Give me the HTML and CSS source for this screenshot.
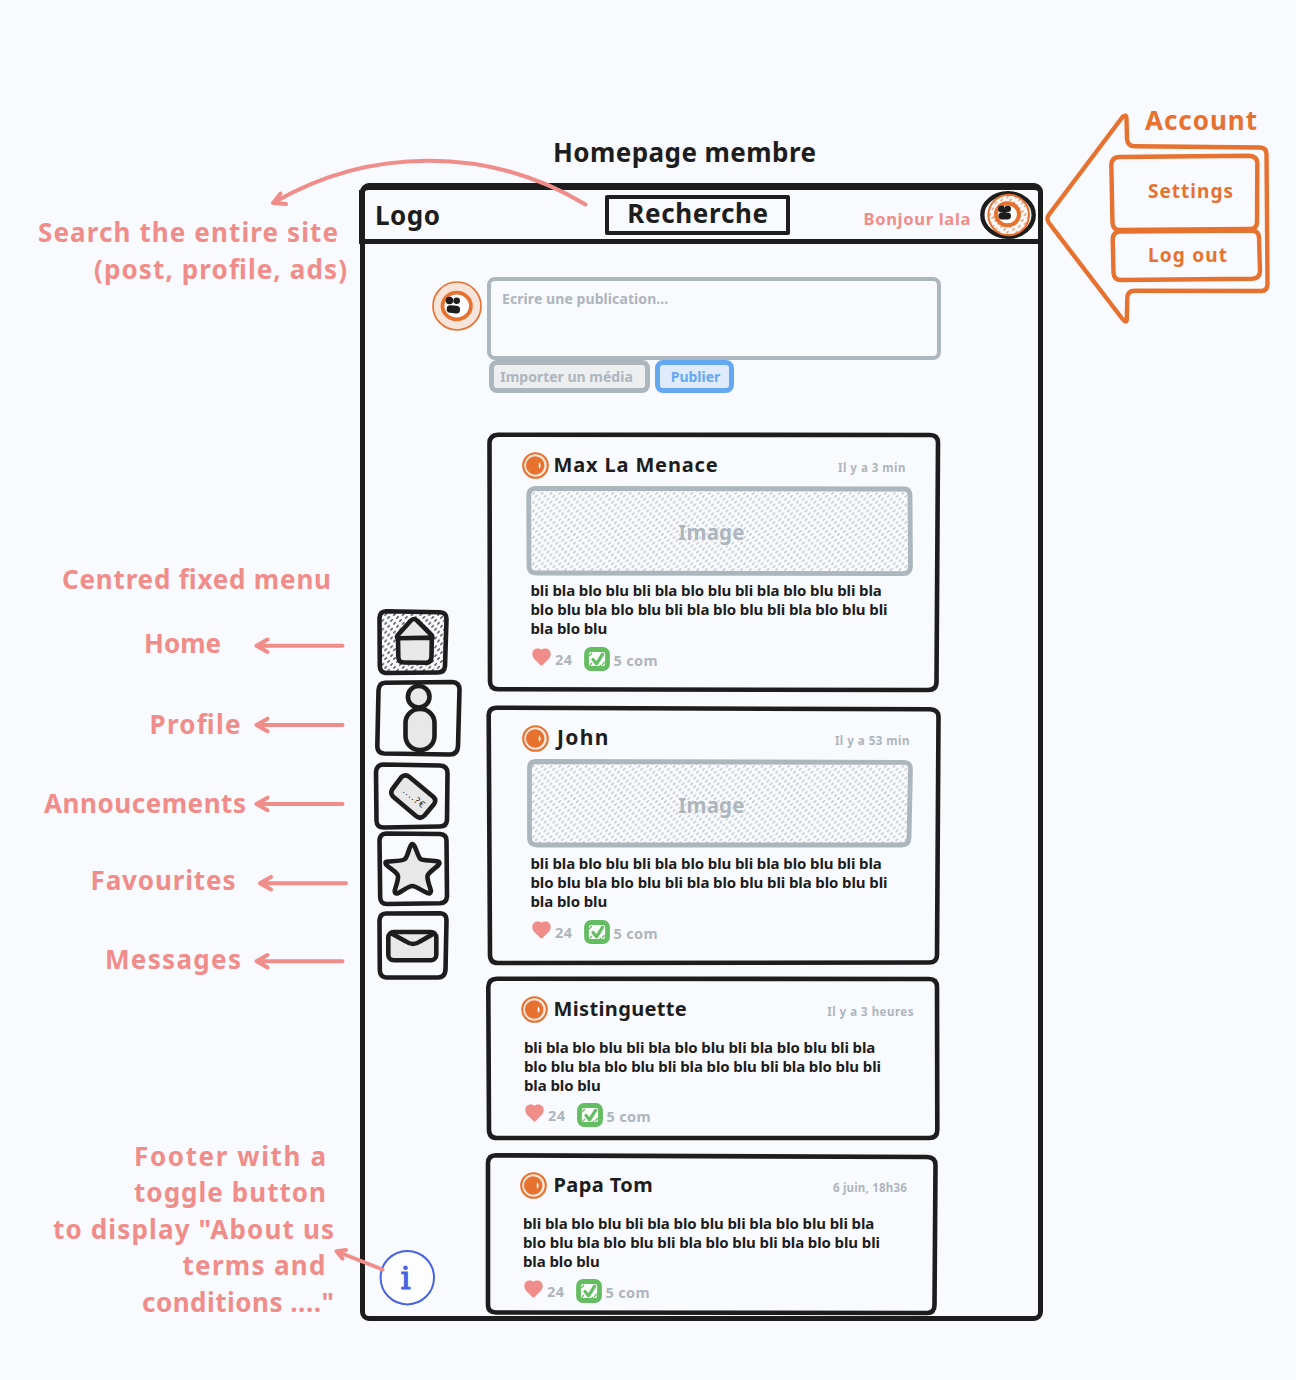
FILE: index.html
```html
<!DOCTYPE html>
<html lang="fr">
<head>
<meta charset="utf-8">
<title>Homepage membre</title>
<link rel="stylesheet" href="styles.css">
</head>
<body>
<svg class="defs" aria-hidden="true">
  <defs>
    <pattern id="hatch-grey" width="8.8" height="8.8" patternUnits="userSpaceOnUse">
      <path transform="scale(1.1)" d="M.66 2 2 .66M3.33 4.66 4.66 3.33M6 7.33 7.33 6" stroke="#bfc4c9" stroke-width="1.35" stroke-linecap="round"/>
    </pattern>
    <pattern id="hatch-black" width="8.8" height="8.8" patternUnits="userSpaceOnUse">
      <path transform="scale(1.1)" d="M.66 2 2 .66M3.33 4.66 4.66 3.33M6 7.33 7.33 6" stroke="#444" stroke-width="1.25" stroke-linecap="round"/>
    </pattern>
    <pattern id="hatch-orange" width="8.8" height="8.8" patternUnits="userSpaceOnUse">
      <path transform="scale(1.1)" d="M.66 2 2 .66M3.33 4.66 4.66 3.33M6 7.33 7.33 6" stroke="#ec8c55" stroke-width="1.25" stroke-linecap="round"/>
    </pattern>
  </defs>
  <symbol id="badge" viewBox="0 0 27 27">
    <circle cx="13.5" cy="13.5" r="12.3" fill="#f9e6db" stroke="#e7712f" stroke-width="2.1"/>
    <circle cx="13.2" cy="13.5" r="9.2" fill="#e7712f"/>
    <path d="M17 10.3q3.2 3.2.2 6.6-.9-3.300-.2-6.600z" fill="#fff"/>
  </symbol>
  <symbol id="heart" viewBox="0 0 19 18">
    <path d="M9.500 1.900C7.500-.3.300-.4.300 6c0 5 4.700 6.700 7.500 10.600q1.700 1.700 3.400 0C14 12.700 18.700 11 18.700 6c0-6.400-7.200-6.300-9.200-4.100z" fill="#f08c89"/>
  </symbol>
  <symbol id="check" viewBox="0 0 26 24">
    <rect x="2.500" y="2.500" width="21" height="19" rx="4.500" fill="#fbfdfb" stroke="#65bd63" stroke-width="4.800"/>
    <path d="M5 9l3-3M6 18l2-2M18 18l3-3M15 20l2-2" stroke="#65bd63" stroke-width="1.300"/>
    <path d="M9 12.500l3.500 4.300 6-9.500" fill="none" stroke="#65bd63" stroke-width="3.200" stroke-linecap="round" stroke-linejoin="round"/>
  </symbol>
</svg>

<div class="board">
  <section class="site">
    <header class="topbar">
      <span class="logo">Logo</span>
      <span class="search">Recherche</span>
      <span class="hello">Bonjour lala</span>
      <svg class="me" width="56" height="48" viewBox="980 192 56 48">
        <ellipse cx="1008" cy="216" rx="25.700" ry="21.700" fill="#f9fafd" stroke="#1d1d1d" stroke-width="4.400"/>
        <circle cx="1008.700" cy="216" r="20.300" fill="url(#hatch-orange)" stroke="#e7712f" stroke-width="2"/>
        <ellipse cx="1007.500" cy="215.300" rx="11.500" ry="11" fill="#fff" stroke="#e7712f" stroke-width="4"/>
        <g fill="#1d1d1d">
          <circle cx="1001.500" cy="210" r="3.400"/><circle cx="1007.800" cy="209.800" r="3.200"/>
          <rect x="998.500" y="213.500" width="12.500" height="7" rx="3.400"/><circle cx="1004.500" cy="212" r="2.300"/>
        </g>
      </svg>
    </header>

    <main class="content">
      <div class="composer">
        <svg class="portrait" width="50" height="50" viewBox="432 281 50 50">
          <circle cx="457" cy="306" r="24" fill="#f6e4da" stroke="#e7712f" stroke-width="1.700"/>
          <ellipse cx="456.700" cy="306" rx="14.200" ry="13.300" fill="#fff" stroke="#e7712f" stroke-width="3.800"/>
          <g fill="#1d1d1d">
            <circle cx="449.500" cy="300.500" r="3.800"/><circle cx="456.700" cy="300.700" r="3.300"/>
            <rect x="446.700" y="305.500" width="13.400" height="7.600" rx="3.700" transform="rotate(6 453 309)"/>
          </g>
        </svg>
        <div class="editor">
          <div class="field"><span>Ecrire une publication...</span></div>
          <div class="buttons">
            <button class="btn btn-media"><span>Importer un média</span></button>
            <button class="btn btn-send"><span>Publier</span></button>
          </div>
        </div>
      </div>

      <nav class="menu">
        <svg class="tile tile-in" width="72" height="66" viewBox="377 609 72 66">
          <path class="ink" fill="url(#hatch-black)" d="M386 611.300L440 612.200Q446.500 612.500 446.500 619L445 666Q444.500 672.500 438 672.500L386 673Q380 672.500 379.800 666L379.500 618Q380 611.500 386 611.300Z"/>
          <path class="ink solid" d="M398.300 634.500L410.500 621Q414 617 417.500 621L431 634.500Q434 638 431 638L400 638.300Q395 638 398.300 634.500Z"/>
          <path class="ink solid" d="M398 638.300L431.800 637.800L431.500 657Q431 662.800 426 662.800L404 662.500Q398.500 662.500 398.300 657Z"/>
        </svg>
        <svg class="tile tile-profile" width="86" height="77" viewBox="375 679.500 86 77">
          <path class="ink" d="M385 682.300L452 681.500Q459.500 682 459.500 689L458 746Q457.500 753.800 450 754L384 753Q377.300 752.500 377.300 746L378.500 690Q379 682.500 385 682.300Z"/>
          <circle class="ink solid" cx="418.700" cy="696.300" r="10.800"/>
          <rect class="ink solid" x="405.500" y="708.500" width="29" height="41" rx="14"/>
        </svg>
        <svg class="tile tile-ads" width="76" height="68" viewBox="374 762 76 68">
          <path class="ink" d="M383 764.500L440 765.500Q447.500 766 447.500 773L447 820Q446.500 826.500 440 826.500L384 827.500Q376.800 827.500 376.500 821L376 772Q376.500 765 383 764.500Z"/>
          <path class="ink solid" d="M401.500 777Q405.500 773.700 409.500 777L433.500 797Q437 800.500 433.700 804.500L424.500 815.500Q420.500 819.700 416 816L393.500 797Q389.500 793 392.500 789Z"/>
          <text class="price" x="402.500" y="792" transform="rotate(40 402.500 792)" textLength="25">....?€</text>
        </svg>
        <svg class="tile tile-in tile-fav" width="72" height="75" viewBox="377 830.500 72 75">
          <path class="ink" d="M386 833L440 833.500Q446.500 834 446.500 840L447 896Q446.500 902.500 440 902.800L387 903.500Q380.500 903.500 380.200 897L379.500 840Q380 833.300 386 833Z"/>
          <path class="ink solid" d="M410.500 845.500Q412.300 841.500 414.500 845.500C416.500 849.500 418.300 856.500 420.500 858.500C423 860.500 432.500 859.500 438 861Q440.800 862 438.500 864.500C434.500 868.500 428.500 871.500 427.500 875.500C427 880 430 886 431 890.500Q430.500 893.800 427.500 892.500C422 890.500 416 885.500 412.500 885.500C408.500 885.500 402.500 890.500 397.500 893Q394.500 893.500 394.700 890.500C395.500 886 398.500 880 398 875.500C397 871 390 868.500 386 864Q384.300 861 387.500 861C393 860.500 401.500 861 405 858.500C407.500 856 408.500 849.500 410.500 845.500Z"/>
        </svg>
        <svg class="tile tile-in tile-mail" width="72" height="69" viewBox="377 911 72 69">
          <path class="ink" d="M386 913.500L440 913.300Q446.500 913.500 446.500 920L445.500 970Q445 977.500 438 977.500L386 977.500Q380 977 379.800 970L379.500 920Q380 913.800 386 913.500Z"/>
          <rect class="ink solid" x="388.300" y="932" width="48" height="28.300" rx="5.500"/>
          <path class="ink" d="M391.500 933.500L406 941.500Q413 946.500 420 941.500L434 933.500"/>
        </svg>
      </nav>

      <div class="feed">
        <article class="post">
          <svg class="outline"><path d="M11 2.700L443 3Q451 3 451 11L449.500 250Q449.500 258 441 258L11 257.300Q3 257 3 249L2.500 11Q2.700 3 11 2.700Z"/></svg>
          <header class="author"><svg class="badge"><use href="#badge"/></svg><h2 class="n-max">Max La Menace</h2><time>Il y a 3 min</time></header>
          <div class="media">
            <svg><path fill="url(#hatch-grey)" d="M9 2.300L378 3Q384 3 384 10L384.500 80Q384.500 87.500 377 87.700L10 87Q3 87 3 80L2.700 9Q3 2.500 9 2.300Z"/></svg><span>Image</span>
          </div>
          <p>bli bla blo blu bli bla blo blu bli bla blo blu bli bla<br>blo blu bla blo blu bli bla blo blu bli bla blo blu bli<br>bla blo blu</p>
          <footer><svg class="heart"><use href="#heart"/></svg><span class="likes">24</span><svg class="check"><use href="#check"/></svg><span class="comments">5 com</span></footer>
        </article>

        <article class="post post-john">
          <svg class="outline"><path d="M9 2.700L443 4.300Q451.500 4.500 451.500 12L450 250Q450 257.500 442 257.500L11 258Q3 258 3 250L1.700 10Q2 3 9 2.700Z"/></svg>
          <header class="author"><svg class="badge"><use href="#badge"/></svg><h2 class="n-john">John</h2><time>Il y a 53 min</time></header>
          <div class="media">
            <svg><path fill="url(#hatch-grey)" d="M10 2.500L378 3.300Q384.700 3.500 384.500 10L383 79Q383 86 375 86L11 86Q3.500 86 3.500 79L3.500 9Q3.500 2.700 10 2.500Z"/></svg><span>Image</span>
          </div>
          <p>bli bla blo blu bli bla blo blu bli bla blo blu bli bla<br>blo blu bla blo blu bli bla blo blu bli bla blo blu bli<br>bla blo blu</p>
          <footer><svg class="heart"><use href="#heart"/></svg><span class="likes">24</span><svg class="check"><use href="#check"/></svg><span class="comments">5 com</span></footer>
        </article>

        <article class="post post-text post-mist">
          <svg class="outline"><path d="M10 2.800L442 3Q450 3 450 11L450.300 154Q450.300 162 442 162L10 162Q2 162 2 154L1.300 11Q1.500 3 10 2.800Z"/></svg>
          <header class="author"><svg class="badge"><use href="#badge"/></svg><h2 class="n-mist">Mistinguette</h2><time>Il y a 3 heures</time></header>
          <p>bli bla blo blu bli bla blo blu bli bla blo blu bli bla<br>blo blu bla blo blu bli bla blo blu bli bla blo blu bli<br>bla blo blu</p>
          <footer><svg class="heart"><use href="#heart"/></svg><span class="likes">24</span><svg class="check"><use href="#check"/></svg><span class="comments">5 com</span></footer>
        </article>

        <article class="post post-text post-tom">
          <svg class="outline"><path d="M9 2.300L440 4Q448.500 4.200 448.500 12L447.500 152Q447.500 160 440 160L9 159.500Q1 159.500 1 152L1 10Q1.200 2.500 9 2.300Z"/></svg>
          <header class="author"><svg class="badge"><use href="#badge"/></svg><h2 class="n-tom">Papa Tom</h2><time>6 juin, 18h36</time></header>
          <p>bli bla blo blu bli bla blo blu bli bla blo blu bli bla<br>blo blu bla blo blu bli bla blo blu bli bla blo blu bli<br>bla blo blu</p>
          <footer><svg class="heart"><use href="#heart"/></svg><span class="likes">24</span><svg class="check"><use href="#check"/></svg><span class="comments">5 com</span></footer>
        </article>
      </div>
    </main>
  </section>

  <!-- Notes and arrows laid over the board -->
  <svg class="notes" width="1296" height="1380" viewBox="0 0 1296 1380">
    <text class="title" x="553" y="162" textLength="263">Homepage membre</text>
    <g class="pink">
      <text x="38" y="242" textLength="300">Search the entire site</text>
      <text x="94" y="279" textLength="253">(post, profile, ads)</text>
      <text x="62" y="589" textLength="269">Centred fixed menu</text>
      <text x="144" y="653" textLength="77">Home</text>
      <text x="149.500" y="734" textLength="91">Profile</text>
      <text x="44" y="813" textLength="202">Annoucements</text>
      <text x="90.500" y="890" textLength="145">Favourites</text>
      <text x="105" y="969" textLength="136">Messages</text>
      <text x="134" y="1166" textLength="192">Footer with a</text>
      <text x="134" y="1202" textLength="192">toggle button</text>
      <text x="53" y="1239" textLength="281">to display "About us</text>
      <text x="182.500" y="1275" textLength="143">terms and</text>
      <text x="142" y="1312" textLength="192">conditions ...."</text>
      <path d="M585.500 204.500C490 146.500 370 146.500 274 202.500M280.500 193.500L273 203L286 204"/>
      <path d="M342.500 645.800H257M267.500 639.500L256.500 645.800L267.500 652"/>
      <path d="M342.500 725H257M267.500 718.700L256.500 725L267.500 731.200"/>
      <path d="M342.500 804H257M267.500 797.700L256.500 804L267.500 810.200"/>
      <path d="M346 883.300H260.500M271 877L260 883.300L271 889.500"/>
      <path d="M342.500 961.300H257M267.500 955L256.500 961.300L267.500 967.500"/>
    </g>
    <circle cx="407.300" cy="1277.700" r="26.700" fill="#fdfdfe" stroke="#4662e4" stroke-width="2"/>
    <text class="info" x="405.700" y="1289" text-anchor="middle">i</text>
    <path class="pink-line" d="M382.500 1269.500L337 1251.500M346 1250L336.500 1251.300L342.500 1258.500"/>
    <g class="orange">
      <text x="1145" y="130" textLength="112">Account</text>
      <text class="small" x="1148" y="197.500" textLength="85">Settings</text>
      <text class="small" x="1148" y="261.500" textLength="79">Log out</text>
      <path d="M1049 214.500L1122.500 117Q1126.500 113.500 1126.500 119L1127 139Q1127.500 146.300 1135 146.300L1260 147.500Q1266.500 147.700 1266.500 154L1267.500 284Q1267.500 291 1261 291L1135 290.700Q1127.500 290.700 1127.300 298L1126.800 319Q1126.500 324 1122.500 319L1049 223Q1046 218.500 1049 214.500Z"/>
      <path d="M1119 157L1249 155.800Q1257.300 156.300 1257.300 163L1257 222Q1257 229 1250 229L1120 230Q1113 230 1112.500 223L1111.300 165Q1111.500 157.500 1119 157Z"/>
      <path d="M1120 231.500L1252 230.500Q1259 231 1259 238L1260 271Q1260 278.500 1252 278.800L1121 280Q1114 280 1113.500 273L1112.700 239Q1113 232 1120 231.500Z"/>
    </g>
  </svg>
</div>
</body>
</html>
```
FILE: styles.css
```css
* { box-sizing: border-box; }

body {
  margin: 0;
  background: #f9fafd;
  color: #1d1d1d;
  font-family: "Noto Sans", sans-serif;
  font-weight: 700;
}

svg { display: block; overflow: visible; }
.defs { position: absolute; width: 0; height: 0; }

.board { position: relative; width: 1296px; height: 1380px; overflow: hidden; }

.notes { position: absolute; left: 0; top: 0; pointer-events: none; }
.notes text { font-size: 26px; }
.notes .title { fill: #1d1d1d; }
.pink { fill: #f08c89; }
.pink path, .pink-line {
  fill: none; stroke: #f08c89; stroke-width: 4;
  stroke-linecap: round; stroke-linejoin: round;
}
.orange { fill: #e7712f; }
.orange path { fill: none; stroke: #e7712f; stroke-width: 4.4; stroke-linejoin: round; }
.notes .small { font-size: 19px; }
.notes .info { font-family: "DejaVu Serif", serif; font-size: 32px; font-weight: 400; fill: #4662e4; stroke: #4662e4; stroke-width: 1; }

/* Site frame */
.site {
  position: absolute; left: 360px; top: 183px;
  width: 682.500px; height: 1138px;
  border: 5px solid #1d1d1d; border-top-width: 7px;
  border-radius: 9px;
}

.topbar {
  display: flex; align-items: center;
  height: 54px; margin-left: -6px; padding-left: 15px;
  border-left: 6px solid #1d1d1d; border-bottom: 5px solid #1d1d1d;
}
.logo { width: 229.500px; margin-left: -5px; font-size: 26px; letter-spacing: .5px; line-height: 40px; }
.search {
  width: 185px; height: 40px; border: 4px solid #1d1d1d; border-radius: 2px;
  font-size: 26px; line-height: 29px; text-align: center; letter-spacing: .7px; text-indent: 2px;
}
.hello { width: 107px; margin-left: 74px; padding-top: 8px; color: #f08c89; font-size: 16.500px; line-height: 22px; letter-spacing: .7px; white-space: nowrap; }
.me { margin: 1px 0 0 9.500px; flex: none; }

.content {
  display: grid;
  grid-template-columns: 122px 453px;
  grid-template-rows: 188px auto;
}

.composer { grid-column: 1 / 3; display: flex; gap: 5px; padding: 33px 0 0 67px; }
.portrait { margin-top: 4px; flex: none; }
.editor { width: 454px; flex: none; }
.field {
  height: 83px; padding: 8px 11px; border: 4.500px solid #adb5bd; border-radius: 8px;
  color: #adb5bd; font-size: 14px; line-height: 19px; letter-spacing: .08px;
}
.buttons { display: flex; gap: 5px; margin: 0 0 0 2px; }
.btn {
  height: 33px; padding: 0; border: 5px solid #adb5bd; border-radius: 8px;
  background: #eceef0; color: #adb5bd;
  font: 700 14px/20px "Noto Sans", sans-serif; white-space: nowrap;
}
.btn-media { width: 161px; padding-right: 6px; }
.btn-send { width: 79px; padding-left: 2px; border-color: #65a8f2; background: #dfeafa; color: #65a8f2; }

/* Side menu */
.menu { display: flex; flex-direction: column; padding: 177px 0 0 8.500px; }
.tile { flex: none; }
.tile-in { margin-left: 3px; }
.tile-profile { margin: 4.500px 0 0 1px; }
.tile-ads { margin-top: 5.500px; }
.tile-fav { margin-top: .5px; }
.tile-mail { margin-top: 5.500px; }
.ink { fill: none; stroke: #1d1d1d; stroke-width: 4.600; stroke-linecap: round; stroke-linejoin: round; }
path.ink[fill^="url"] { fill: url(#hatch-black); }
.ink.solid { fill: #e8e8e8; }
.price { font-size: 9px; font-weight: 400; fill: #1d1d1d; }

/* Posts */
.post { position: relative; width: 453px; height: 261px; padding: 19.500px 0 0 34.500px; }
.post-john { margin-top: 12px; }
.post-mist { margin-top: 10px; height: 164px; padding-left: 33.500px; }
.post-tom { margin-top: 13px; height: 162px; padding: 19px 0 0 32.500px; }
.outline { position: absolute; left: 0; top: 0; width: 100%; height: 100%; }
.outline path { fill: none; stroke: #1d1d1d; stroke-width: 4.600; }

.author { display: flex; align-items: center; height: 27px; padding-right: 34px; }
.post-john .author { padding-right: 30px; }
.post-mist .author { padding-right: 26px; }
.post-tom .author { padding-right: 33px; }
.badge { width: 27px; height: 27px; flex: none; }
.author h2 { margin: -2px 0 0 5px; font-size: 20px; line-height: 27px; white-space: nowrap; }
.author .n-max { letter-spacing: .85px; }
.author .n-john { margin-left: 8.500px; font-size: 21px; letter-spacing: 1.300px; }
.author .n-mist { margin-left: 6px; letter-spacing: .35px; }
.author .n-tom { margin-left: 7px; letter-spacing: .4px; }
.author time { margin: 6px 0 0 auto; color: #adb5bd; font-size: 11.500px; line-height: 16px; letter-spacing: .5px; white-space: nowrap; }
.post-tom time { margin-top: 4px; letter-spacing: .2px; }

.media {
  position: relative; display: grid; place-items: center;
  width: 387px; height: 90px; margin: 7.500px 0 0 4.500px; padding-right: 16px;
  color: #adb5bd; font-size: 20.500px;
}
.media svg { position: absolute; left: 0; top: 0; width: 100%; height: 100%; }
.media path { stroke: #adb5bd; stroke-width: 4.800; }
.media span { position: relative; padding-top: 2px; letter-spacing: .2px; text-shadow: 0 0 2px #f9fafd, 0 0 2px #f9fafd, 0 0 1px #f9fafd; }

.post p { margin: 5px 0 0 9px; font-size: 15px; line-height: 19px; white-space: nowrap; letter-spacing: -.11px; }
.post-text p { margin: 15px 0 0 3.500px; }
.post footer { display: flex; margin: 9px 0 0 10.500px; color: #adb5bd; font-size: 14.500px; line-height: 20px; }
.post-text footer { margin: 8px 0 0 4.500px; }
.heart { width: 19px; height: 18px; margin-top: 1px; }
.likes { width: 18px; margin: 2px 0 0 4px; letter-spacing: .4px; }
.check { width: 26px; height: 24px; margin-left: 10.500px; }
.comments { margin: 3px 0 0 4px; letter-spacing: .35px; white-space: nowrap; }
```
